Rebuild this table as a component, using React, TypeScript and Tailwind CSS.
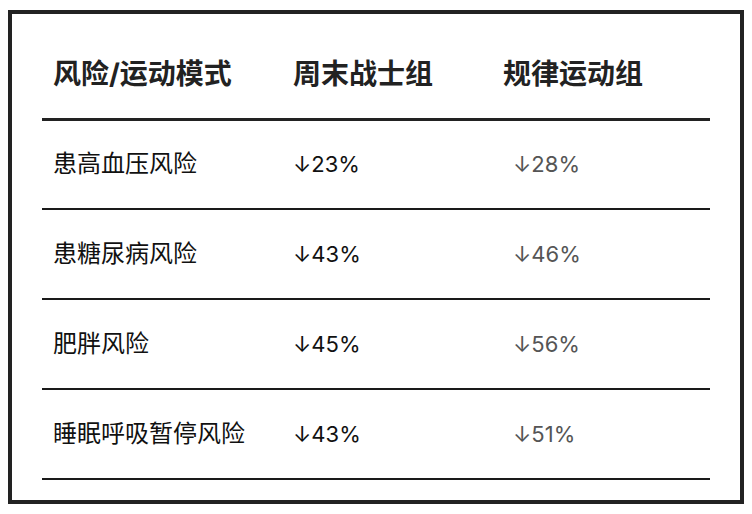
const rows = [
  { risk: "患高血压风险", weekend: "↓23%", regular: "↓28%" },
  { risk: "患糖尿病风险", weekend: "↓43%", regular: "↓46%" },
  { risk: "肥胖风险", weekend: "↓45%", regular: "↓56%" },
  { risk: "睡眠呼吸暂停风险", weekend: "↓43%", regular: "↓51%" },
]

export default function App() {
  return (
    <div className="h-[514px] w-[752px] bg-white pt-[10px] pl-[8px] font-['Inter','Noto_Sans_CJK_SC',sans-serif]">
      <div className="h-[494px] w-[736px] border-4 border-[#222] px-[30px] pt-[20px]">
        <table className="w-[668px] table-fixed border-collapse">
          <colgroup>
            <col className="w-[240px]" />
            <col className="w-[210px]" />
            <col className="w-[218px]" />
          </colgroup>
          <thead>
            <tr className="h-[85px] border-b-[3px] border-[#222]">
              <th className="pb-[3px] pl-[11px] text-left text-[28px] font-bold text-[#222]">风险/运动模式</th>
              <th className="pb-[3px] pl-[11px] text-left text-[28px] font-bold text-[#222]">周末战士组</th>
              <th className="pb-[3px] pl-[11px] text-left text-[28px] font-bold text-[#222]">规律运动组</th>
            </tr>
          </thead>
          <tbody>
            {rows.map((row) => (
              <tr key={row.risk} className="h-[90px] border-b-2 border-[#1a1a1a]">
                <td className="pl-[11px] text-[24px] text-[#111]">{row.risk}</td>
                <td className="pl-[11px] text-[22px] text-[#111]">{row.weekend}</td>
                <td className="pl-[21px] text-[22px] text-[#555]">{row.regular}</td>
              </tr>
            ))}
          </tbody>
        </table>
      </div>
    </div>
  )
}
